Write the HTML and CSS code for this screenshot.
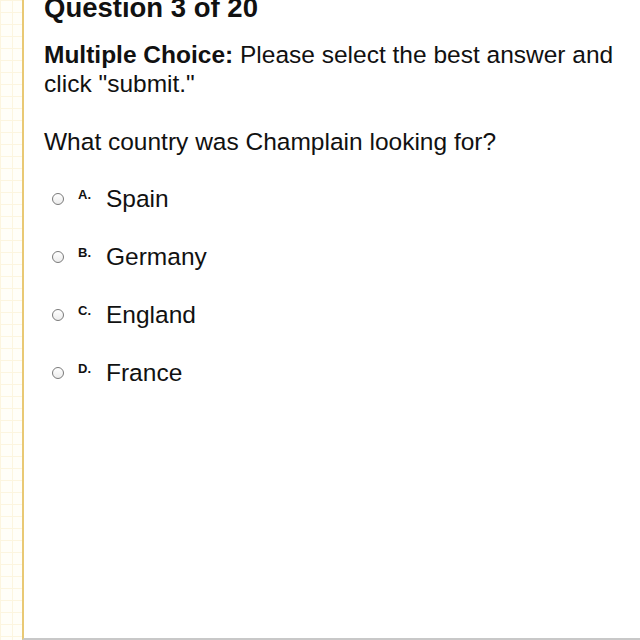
FILE: index.html
```html
<!DOCTYPE html>
<html>
<head>
    <title>Question 3 of 20</title>
    <link rel="stylesheet" href="styles.css">
</head>
<body>
    <div class="page">
        <div class="margin-strip"></div>
        <div class="sheet">
            <h1 class="question-title">Question 3 of 20</h1>
            <p class="instructions"><strong>Multiple Choice:</strong> Please select the best answer and click "submit."</p>
            <p class="prompt">What country was Champlain looking for?</p>
            <ul class="choices">
                <li class="choice">
                    <span class="radio"></span>
                    <span class="letter">A.</span>
                    <span class="answer">Spain</span>
                </li>
                <li class="choice">
                    <span class="radio"></span>
                    <span class="letter">B.</span>
                    <span class="answer">Germany</span>
                </li>
                <li class="choice">
                    <span class="radio"></span>
                    <span class="letter">C.</span>
                    <span class="answer">England</span>
                </li>
                <li class="choice">
                    <span class="radio"></span>
                    <span class="letter">D.</span>
                    <span class="answer">France</span>
                </li>
            </ul>
        </div>
    </div>
</body>
</html>
```

FILE: styles.css
```css
body {
    margin: 0;
    font-family: "Liberation Sans", Arial, sans-serif;
    color: #111;
    background: #fff;
}

.page {
    display: flex;
    height: 640px;
    overflow: hidden;
}

.margin-strip {
    width: 22px;
    flex-shrink: 0;
    background-color: #fffef8;
    background-image:
        linear-gradient(to right, #fcf5df 1px, transparent 1px),
        linear-gradient(to bottom, #fcf5df 1px, transparent 1px);
    background-size: 12px 12px;
}

.sheet {
    flex: 1;
    border-left: 2px solid #e9c974;
    border-bottom: 2px solid #c8c8c8;
    padding: 0 6px 0 20px;
}

.question-title {
    font-size: 27.5px;
    font-weight: bold;
    line-height: 32px;
    margin: -8px 0 0 0;
}

.instructions {
    font-size: 24.5px;
    line-height: 29px;
    margin: 16px 0 0 0;
}

.prompt {
    font-size: 24.5px;
    line-height: 29px;
    margin: 29px 0 0 0;
}

.choices {
    list-style: none;
    margin: 14px 0 0 0;
    padding: 0;
}

.choice {
    display: flex;
    align-items: center;
    height: 58px;
}

.radio {
    width: 10px;
    height: 10px;
    border: 1.5px solid #7a7a7a;
    border-radius: 50%;
    margin: 0 14px 0 8px;
    background: linear-gradient(#fff, #ececec);
}

.letter {
    font-size: 13px;
    font-weight: bold;
    width: 28px;
    margin-top: -10px;
}

.answer {
    font-size: 24.5px;
}
```
